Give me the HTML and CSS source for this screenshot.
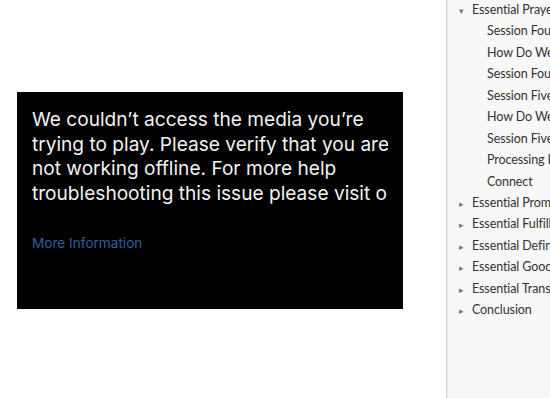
FILE: index.html
```html
<!DOCTYPE html>
<html>
<head>
  <title>Media Error</title>
  <link rel="stylesheet" href="styles.css">
</head>
<body>
  <div class="page">
    <div class="player-area">
      <div class="error-box">
        <div class="error-text">
          <div class="line">We couldn’t access the media you’re</div>
          <div class="line">trying to play. Please verify that you are</div>
          <div class="line">not working offline. For more help</div>
          <div class="line">troubleshooting this issue please visit our support page.</div>
        </div>
        <a class="more-info" href="#">More Information</a>
      </div>
    </div>

    <div class="sidebar">
      <ul class="toc">
        <li class="section open"><span class="arrow">&#9662;</span>Essential Prayer</li>
        <li class="sub">Session Four</li>
        <li class="sub">How Do We Pray</li>
        <li class="sub">Session Four</li>
        <li class="sub">Session Five</li>
        <li class="sub">How Do We Ask</li>
        <li class="sub">Session Five</li>
        <li class="sub">Processing Ideas</li>
        <li class="sub">Connect</li>
        <li class="section"><span class="arrow">&#9656;</span>Essential Promises</li>
        <li class="section"><span class="arrow">&#9656;</span>Essential Fulfillment</li>
        <li class="section"><span class="arrow">&#9656;</span>Essential Definitions</li>
        <li class="section"><span class="arrow">&#9656;</span>Essential Goodness</li>
        <li class="section"><span class="arrow">&#9656;</span>Essential Transformation</li>
        <li class="section"><span class="arrow">&#9656;</span>Conclusion</li>
      </ul>
    </div>
  </div>
</body>
</html>
```

FILE: styles.css
```css
html, body {
  margin: 0;
  padding: 0;
  background: #fff;
  overflow: hidden;
}

.page {
  display: flex;
  width: 550px;
  height: 398px;
}

.player-area {
  width: 446px;
  flex: none;
  padding: 92px 0 0 17px;
  box-sizing: border-box;
}

.error-box {
  width: 386px;
  height: 217px;
  background: #000;
  box-sizing: border-box;
  padding: 15px 0 0 15px;
  font-family: Inter, "Liberation Sans", sans-serif;
}

.error-text {
  width: 356px;
  overflow: hidden;
  color: #f2f2f2;
  font-size: 19.1px;
  line-height: 24.7px;
}

.line {
  white-space: nowrap;
}

.more-info {
  display: block;
  margin-top: 29px;
  color: #2f5f9e;
  font-size: 13.6px;
  text-decoration: none;
}

.sidebar {
  flex: 1;
  background: #f8f8f8;
  border-left: 1px solid #d6d6d6;
  box-shadow: inset 1px 0 0 #eaeaea;
  overflow: hidden;
}

.toc {
  list-style: none;
  margin: 0;
  padding: 1px 0 0;
  font-family: Lato, sans-serif;
  font-size: 12.5px;
  letter-spacing: -0.1px;
  color: #333;
}

.toc li {
  height: 21.45px;
  line-height: 18px;
  white-space: nowrap;
}

.section {
  padding-left: 12px;
}

.arrow {
  display: inline-block;
  width: 13px;
  font-size: 9px;
  color: #777;
}

.sub {
  padding-left: 40px;
}
```
